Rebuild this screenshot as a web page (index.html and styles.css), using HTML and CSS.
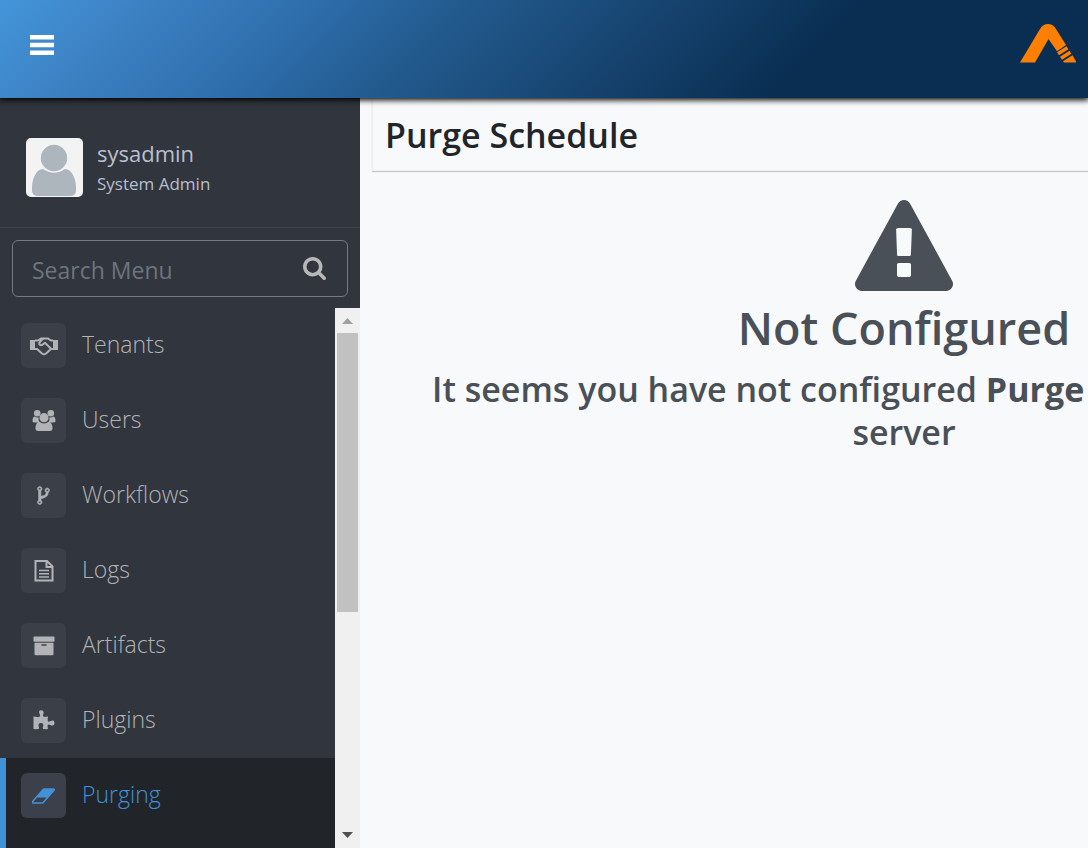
FILE: index.html
```html
<!DOCTYPE html>
<html lang="en">
<head>
<meta charset="utf-8">
<meta name="viewport" content="width=device-width, initial-scale=1">
<title>Purge Schedule</title>
<link rel="stylesheet" href="styles.css">
</head>
<body>
<header class="topbar">
  <button class="menu-toggle" type="button" aria-label="Toggle menu">
    <svg class="bars" viewBox="0 0 24 20"><path d="M0 0h24v4.600H0zM0 7.700h24v4.600H0zM0 15.400h24V20H0z"/></svg>
  </button>
  <a class="brand" href="#" aria-label="Home">
    <svg class="brand-mark" viewBox="0 0 56 39"><path d="M0 38.500 20 5q3-5 8-5t8 5l10 16-9 6.200L28.500 15 15 38.500z"/><path d="M37 28.300l9.500-6 1.900 2.900-9.400 6.100zM40 32.700l9.500-6 1.900 3-9.400 6.100zM43 37.200l9.500-6L56.500 38.500H44z"/></svg>
  </a>
</header>
<div class="page">
  <aside class="sidebar">
    <section class="profile">
      <svg class="avatar" viewBox="0 0 57 59" aria-hidden="true"><rect width="57" height="59" fill="#f3f3f3"/><path d="M17 31q5 3.500 11 3.500T39 31q5 0 8 6 3.500 7 3 16-.5 5-6 5H12q-5.500 0-6-5-.500-9 3-16 3-6 8-6z"/><circle cx="28" cy="20" r="14.500" fill="#f3f3f3"/><circle cx="28" cy="20" r="13.200"/></svg>
      <div class="profile-text">
        <span class="profile-name">sysadmin</span>
        <span class="profile-role">System Admin</span>
      </div>
    </section>
    <form class="search">
      <label class="search-box">
        <input class="search-input" type="text" placeholder="Search Menu" aria-label="Search Menu">
        <svg class="search-icon" viewBox="0 0 1664 1664"><path transform="translate(-64 -128)" d="M1216 832q0-185-131.500-316.500t-316.500-131.500-316.500 131.500-131.500 316.500 131.500 316.500 316.500 131.500 316.500-131.500 131.500-316.500zm512 832q0 52-38 90t-90 38q-54 0-90-38l-343-342q-179 124-399 124-143 0-273.500-55.500t-225-150-150-225-55.500-273.500 55.500-273.500 150-225 225-150 273.500-55.500 273.500 55.500 225 150 150 225 55.500 273.500q0 220-124 399l343 343q37 37 37 90z"/></svg>
      </label>
    </form>
    <div class="menu-area">
      <nav class="menu">
        <a class="item" href="#"><span class="tile"><svg class="icon" viewBox="0 0 30 24"><path d="M1 6h5v10H1zM24 6h5v10h-5z"/><path class="line" d="M6 6.500h3l3-2h3M6 15h2l5 4.500q2 1.500 4 0l5-4.500h2M24 6.500h-2l-3-2h-3.500q-1.500 0-2.500 1l-2.500 3q-.700 2 1 2.600 1.500.400 3-1l1.500-1.300 6 6"/></svg></span>Tenants</a>
        <a class="item" href="#"><span class="tile"><svg class="icon" viewBox="0 0 30 24"><circle cx="8.200" cy="4.300" r="3.300"/><circle cx="21.800" cy="4.300" r="3.300"/><path d="M3.500 12.500q0-5 2.300-5 1.200 1 2.800 1h1.100q-.700 3 .800 5H6q-2.500 0-2.500-1zM26.500 12.500q0-5-2.300-5-1.200 1-2.800 1h-1.100q.700 3-.800 5H24q2.500 0 2.500-1z"/><circle cx="15" cy="8.700" r="4.600"/><path d="M10.500 12.800q2 1.600 4.500 1.600t4.500-1.600q4 .5 4 6.700 0 2.500-3 2.500h-11q-3 0-3-2.500 0-6.200 4-6.700z"/></svg></span>Users</a>
        <a class="item" href="#"><span class="tile"><svg class="icon fork" viewBox="0 0 1792 1792"><path d="M672 1472q0-40-28-68t-68-28-68 28-28 68 28 68 68 28 68-28 28-68zm0-1152q0-40-28-68t-68-28-68 28-28 68 28 68 68 28 68-28 28-68zm640 128q0-40-28-68t-68-28-68 28-28 68 28 68 68 28 68-28 28-68zm96 0q0 52-26 96.500t-70 69.500q-2 287-226 414-67 38-203 81-128 40-169.500 71t-41.500 100v26q44 25 70 69.500t26 96.500q0 80-56 136t-136 56-136-56-56-136q0-52 26-96.500t70-69.500v-820q-44-25-70-69.500t-26-96.500q0-80 56-136t136-56 136 56 56 136q0 52-26 96.500t-70 69.500v497q54-26 154-57 55-17 87.500-29.500t70.500-31 59-39.500 40.500-51 28-69.500 8.500-91.500q-44-25-70-69.500t-26-96.500q0-80 56-136t136-56 136 56 56 136z"/></svg></span>Workflows</a>
        <a class="item" href="#"><span class="tile"><svg class="icon" viewBox="0 0 30 24"><path class="line" d="M6.500 2h11.500l5.500 5.500V21.500h-17zM17.500 2v6h6"/><path class="line thin" d="M10 11.500h10M10 14.700h10M10 17.900h10"/></svg></span>Logs</a>
        <a class="item" href="#"><span class="tile"><svg class="icon" viewBox="0 0 30 24"><rect x="4.500" y="2.500" width="21" height="5.200" rx="1"/><path fill-rule="evenodd" d="M5.500 8.700h19V20q0 1.300-1.300 1.300H6.800q-1.300 0-1.300-1.300zM13 10.300q-.8 0-.8.700t.8.700h4q.8 0 .8-.7t-.8-.7z"/></svg></span>Artifacts</a>
        <a class="item" href="#"><span class="tile"><svg class="icon" viewBox="0 0 30 24"><path d="M4.500 7.500q3.500.8 6 .3 1.300-.5.3-2.300Q8.800 1.200 12 1.200t2.500 3.600q-1.300 2.200 0 2.900 2 .4 4.500-.2-.5 2.500-.2 4.500.7 1.200 2.200.2 4.500-2 4.500 1.800t-4.300 2q-2-1.200-2.600.4-.1 1.600.4 3.600-2.500.3-4.700 0-1.300-.6-.2-2.500 1.100-3.500-2.100-3.500t-2.300 3.500q1.200 2-.3 2.600-2.100.3-4.900 0z"/></svg></span>Plugins</a>
        <a class="item active" href="#" aria-current="page"><span class="tile"><svg class="icon eraser" viewBox="0 0 1920 1792"><path d="M832 1408l336-384h-768l-336 384h768zm1013-1077q15 34 9.500 71.500t-30.500 65.500l-896 1024q-38 44-96 44h-768q-38 0-69.500-20.500t-47.500-54.500q-15-34-9.500-71.500t30.500-65.500l896-1024q38-44 96-44h768q38 0 69.500 20.500t47.500 54.500z"/></svg></span>Purging</a>
      </nav>
      <div class="scrollbar" aria-hidden="true">
        <svg class="arrow up" viewBox="0 0 11 6"><path d="M5.500 0 11 6H0z"/></svg>
        <div class="track"><div class="thumb"></div></div>
        <svg class="arrow" viewBox="0 0 11 6"><path d="M0 0h11L5.500 6z"/></svg>
      </div>
    </div>
  </aside>
  <main class="content">
    <h1 class="title">Purge Schedule</h1>
    <section class="notice">
      <svg class="warning" viewBox="0 0 1792 1664" aria-hidden="true"><path d="M1024 1375v-190q0-14-9.500-23.500t-22.500-9.500h-192q-13 0-22.500 9.500t-9.500 23.500v190q0 14 9.500 23.500t22.500 9.500h192q13 0 22.500-9.500t9.500-23.500zm-2-374l18-459q0-12-10-19-13-11-24-11h-220q-11 0-24 11-10 7-10 21l17 457q0 10 10 16.500t24 6.500h185q14 0 23.500-6.500t10.500-16.500zm-14-934l768 1408q35 63-2 126-17 29-46.500 46t-63.500 17h-1536q-34 0-63.500-17t-46.500-46q-37-63-2-126l768-1408q17-31 47-49t65-18 65 18 47 49z"/></svg>
      <h2 class="notice-title">Not Configured</h2>
      <p class="notice-text"><span class="lead">It seems you have not configured <b>Purge</b></span> <span class="tail">server</span></p>
    </section>
  </main>
</div>
</body>
</html>
```
FILE: styles.css
```css
* { box-sizing: border-box; }

body {
  margin: 0;
  height: 100vh;
  display: flex;
  flex-direction: column;
  overflow: hidden;
  background: #f8f9fb;
  color: #212529;
  font-family: "Open Sans", "Noto Sans", sans-serif;
}

svg { display: block; fill: currentColor; }

.topbar {
  position: relative;
  z-index: 1;
  flex: none;
  display: flex;
  align-items: center;
  justify-content: space-between;
  height: 98px;
  padding: 0 12px 8px 30px;
  background: linear-gradient(135deg, #4495da 0%, #3b7fc0 14%, #2f6fae 26%, #235b8f 39%, #0a2e52 73%);
  box-shadow: 0 1px 6px 1px #000;
}

.menu-toggle {
  padding: 0;
  border: 0;
  background: none;
  color: #fff;
}

.bars { width: 24px; height: 20px; }
.brand { padding-bottom: 4px; color: #ff7f00; }
.brand-mark { width: 56px; height: 39px; }

.page { flex: 1; display: flex; min-height: 0; }

.sidebar {
  flex: 0 0 360px;
  min-width: 0;
  display: flex;
  flex-direction: column;
  background: #31353d;
}

.profile {
  display: flex;
  gap: 14px;
  padding: 40px 26px 29px;
  border-bottom: 1px solid #3f444d;
}

.avatar { width: 57px; height: 59px; border-radius: 5px; color: #adb5bd; }
.profile-text { display: flex; flex-direction: column; color: #b8bfce; }
.profile-name { font-size: 22px; line-height: 31px; }
.profile-role { font-size: 17px; line-height: 29px; }

.search { padding: 12px 12px 11px; }

.search-box {
  display: flex;
  align-items: center;
  height: 57px;
  padding: 0 21px 0 19px;
  border: 1px solid #767b83;
  border-radius: 6px;
}

.search-input {
  flex: 1;
  min-width: 0;
  padding: 2px 0 0;
  border: 0;
  outline: 0;
  background: none;
  color: #b8bfce;
  font: 23px/36px "Open Sans", "Noto Sans", sans-serif;
}

.search-input::placeholder { color: #6c757d; opacity: 1; }
.search-icon { flex: none; width: 23px; height: 23px; color: #b8b8b8; }

.menu-area { flex: 1; display: flex; min-height: 0; }

.menu { flex: 1; display: flex; flex-direction: column; min-width: 0; min-height: 0; }

.item {
  flex: none;
  display: flex;
  align-items: flex-start;
  gap: 16px;
  height: 75px;
  padding: 15px 21px;
  color: #b1b3b6;
  font-size: 23px;
  font-weight: 300;
  line-height: 43px;
  text-decoration: none;
}

.tile {
  flex: none;
  display: grid;
  place-items: center;
  width: 45px;
  height: 45px;
  border-radius: 6px;
  background: #3a3f48;
}

.icon { width: 30px; height: 24px; }
.fork { width: 21px; height: 21px; stroke: currentColor; stroke-width: 50; }
.eraser { width: 24px; height: 22px; }
.line { fill: none; stroke: currentColor; stroke-width: 2; }
.thin { stroke-width: 1.5; }

.active {
  flex: 1 0 auto;
  padding-left: 15px;
  border-left: 6px solid #4291d7;
  background: #212529;
  color: #4291d7;
}

.active .tile { background: #3c404a; }

.scrollbar {
  flex: 0 0 25px;
  display: flex;
  flex-direction: column;
  align-items: center;
  padding: 10px 0;
  background: #f0f0f0;
  color: #505050;
}

.arrow { flex: none; width: 11px; height: 6px; }
.up { color: #a0a0a0; }
.track { flex: 1; width: 21px; padding: 9px 0; }
.thumb { height: 57%; background: #c1c1c1; }

.content { flex: 0 0 100%; padding: 0 12px; }

.title {
  margin: 0;
  padding: 14px 12px 12px;
  border: 1px solid #eceef0;
  border-top: 0;
  box-shadow: 0 1px 1px rgba(0, 0, 0, .2);
  font-size: 34px;
  font-weight: 600;
  line-height: 46px;
}

.notice { padding-top: 29px; color: #495057; }
.warning { width: 98px; height: 91px; margin: 0 auto; }

.notice-title {
  margin: 9px 0 0;
  font-size: 45px;
  font-weight: 600;
  line-height: 56px;
  text-align: center;
}

.notice-text {
  margin: 12px 0 0;
  font-size: 34px;
  font-weight: 600;
  line-height: 43px;
}

.notice-text b { font-weight: 700; }
.lead { display: block; padding-left: 60px; white-space: nowrap; }
.tail { display: block; text-align: center; }
```
